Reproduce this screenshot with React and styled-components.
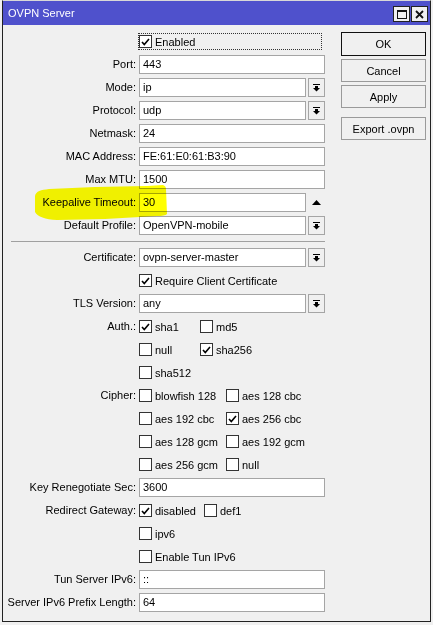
import * as React from "react"
import styled, { createGlobalStyle } from "styled-components"

const GlobalStyle = createGlobalStyle`
    html, body {
        margin: 0;
        padding: 0;
        background: #f0f0f0;
    }

    body {
        font-family: "Liberation Sans", Arial, sans-serif;
        font-size: 11px;
        color: #000;
    }
`

const Window = styled.div`
    width: 427px;
    margin-left: 2px;
    border: 1px solid #222;
    border-top-color: #d8d8d8;
    background: #f0f0f0;
`

const TitleBar = styled.div`
    height: 24px;
    background: #4f51cc;
    display: flex;
    align-items: center;
    justify-content: space-between;
    padding: 0 2px 0 5px;
`

const Title = styled.span`
    color: #fff;
    font-size: 11px;
`

const TitleButtons = styled.div`
    display: flex;
    gap: 1px;
    margin-top: 2px;
`

const TitleButton = styled.div`
    width: 15px;
    height: 14px;
    border: 1px solid #222;
    background: #f0f0f0;
    display: flex;
    align-items: center;
    justify-content: center;
`

const Body = styled.div`
    display: flex;
    gap: 16px;
    padding: 5px 4px 7px 0;
`

const Form = styled.div`
    position: relative;
    width: 322px;
    display: flex;
    flex-direction: column;
`

const Row = styled.div`
    display: grid;
    grid-template-columns: 133px 186px;
    column-gap: 3px;
    align-items: start;
    position: relative;
    z-index: 0;
`

const Label = styled.div`
    text-align: right;
    line-height: 23px;
    white-space: nowrap;
`

const Field = styled.div`
    display: flex;
    align-items: center;
    gap: 2px;
    min-height: 23px;
`

const TextBox = styled.div`
    flex: 1;
    height: 17px;
    line-height: 17px;
    padding: 0 3px;
    background: #fff;
    border: 1px solid #a5a5a5;
    white-space: nowrap;
    overflow: hidden;
`

const SideSlot = styled.div`
    width: 17px;
    height: 19px;
    box-sizing: border-box;
    display: flex;
    align-items: center;
    justify-content: center;
    border: 1px solid ${props => (props.$bare ? "transparent" : "#a5a5a5")};
`

const Options = styled.div`
    display: grid;
    grid-template-columns: ${props => props.$cols};
    grid-auto-rows: 23px;
    align-items: center;
`

const CheckLabel = styled.div`
    display: flex;
    align-items: center;
    gap: 3px;
    height: 15px;
    padding-right: 2px;
    border: 1px dotted ${props => (props.$focus ? "#333" : "transparent")};
    margin-left: -1px;
    ${props => props.$focus && "flex: 1; margin-right: 3px;"}
    white-space: nowrap;
`

const Box = styled.span`
    width: 13px;
    height: 13px;
    box-sizing: border-box;
    border: 1px solid #333;
    background: #fff;
    display: inline-flex;
    align-items: center;
    justify-content: center;
`

const Separator = styled.div`
    height: 9px;
    display: flex;
    align-items: center;
    padding-left: 8px;

    &:after {
        content: "";
        flex: 1;
        height: 1px;
        background: #a0a0a0;
    }
`

// marker stroke over the keepalive row
const Highlight = styled.svg`
    position: absolute;
    left: 32px;
    top: 155px;
    width: 132px;
    height: 35px;
    mix-blend-mode: multiply;
    pointer-events: none;
    z-index: 2;
`

const SideButtons = styled.div`
    display: flex;
    flex-direction: column;
    gap: 3px;
    margin-top: 2px;
`

const Button = styled.button`
    width: 85px;
    height: ${props => (props.$default ? "24px" : "23px")};
    margin-top: ${props => props.$gap || 0}px;
    font-family: "Liberation Sans", Arial, sans-serif;
    font-size: 11px;
    color: #000;
    background: #f0f0f0;
    border: 1px solid ${props => (props.$default ? "#111" : "#9a9a9a")};
    padding: 0;
`

const CheckMark = () => (
    <svg width="9" height="8" viewBox="0 0 9 8">
        <path d="M1 4 L3.3 6.6 L8 1" fill="none" stroke="#000" strokeWidth="1.6" />
    </svg>
)

const DropIcon = () => (
    <svg width="7" height="8" viewBox="0 0 7 8">
        <rect x="0" y="0" width="7" height="1" fill="#000" />
        <rect x="2" y="2" width="3" height="2" fill="#000" />
        <polygon points="0,4 7,4 3.5,7.5" fill="#000" />
    </svg>
)

const UpIcon = () => (
    <svg width="9" height="5" viewBox="0 0 9 5">
        <polygon points="0,5 9,5 4.5,0" fill="#000" />
    </svg>
)

const Check = ({ checked, label, focus }) => (
    <CheckLabel $focus={focus}>
        <Box>{checked && <CheckMark />}</Box>
        {label}
    </CheckLabel>
)

const TextRow = ({ label, value, side }) => (
    <Row>
        <Label>{label}</Label>
        <Field>
            <TextBox>{value}</TextBox>
            {side === "drop" && (
                <SideSlot>
                    <DropIcon />
                </SideSlot>
            )}
            {side === "up" && (
                <SideSlot $bare>
                    <UpIcon />
                </SideSlot>
            )}
        </Field>
    </Row>
)

const OptionRow = ({ label, cols, items }) => (
    <Row>
        <Label>{label}</Label>
        <Options $cols={cols}>
            {items.map(([text, on]) => (
                <Check key={text} label={text} checked={on} />
            ))}
        </Options>
    </Row>
)

const App = () => (
    <>
        <GlobalStyle />
        <Window>
            <TitleBar>
                <Title>OVPN Server</Title>
                <TitleButtons>
                    <TitleButton>
                        <svg width="10" height="9" viewBox="0 0 10 9">
                            <rect x="0.5" y="0.5" width="9" height="8" fill="none" stroke="#111" />
                            <rect x="0" y="0" width="10" height="2" fill="#111" />
                        </svg>
                    </TitleButton>
                    <TitleButton>
                        <svg width="9" height="9" viewBox="0 0 9 9">
                            <path d="M1 1 L8 8 M8 1 L1 8" stroke="#111" strokeWidth="1.8" />
                        </svg>
                    </TitleButton>
                </TitleButtons>
            </TitleBar>

            <Body>
                <Form>
                    <Row>
                        <Label />
                        <Field>
                            <Check checked label="Enabled" focus />
                        </Field>
                    </Row>
                    <TextRow label="Port:" value="443" />
                    <TextRow label="Mode:" value="ip" side="drop" />
                    <TextRow label="Protocol:" value="udp" side="drop" />
                    <TextRow label="Netmask:" value="24" />
                    <TextRow label="MAC Address:" value="FE:61:E0:61:B3:90" />
                    <TextRow label="Max MTU:" value="1500" />
                    <TextRow label="Keepalive Timeout:" value="30" side="up" />
                    <TextRow label="Default Profile:" value="OpenVPN-mobile" side="drop" />

                    <Separator />

                    <TextRow label="Certificate:" value="ovpn-server-master" side="drop" />
                    <Row>
                        <Label />
                        <Field>
                            <Check checked label="Require Client Certificate" />
                        </Field>
                    </Row>
                    <TextRow label="TLS Version:" value="any" side="drop" />
                    <OptionRow
                        label="Auth.:"
                        cols="61px auto"
                        items={[
                            ["sha1", true],
                            ["md5", false],
                            ["null", false],
                            ["sha256", true],
                            ["sha512", false],
                        ]}
                    />
                    <OptionRow
                        label="Cipher:"
                        cols="87px auto"
                        items={[
                            ["blowfish 128", false],
                            ["aes 128 cbc", false],
                            ["aes 192 cbc", false],
                            ["aes 256 cbc", true],
                            ["aes 128 gcm", false],
                            ["aes 192 gcm", false],
                            ["aes 256 gcm", false],
                            ["null", false],
                        ]}
                    />
                    <TextRow label="Key Renegotiate Sec:" value="3600" />
                    <OptionRow
                        label="Redirect Gateway:"
                        cols="65px auto"
                        items={[
                            ["disabled", true],
                            ["def1", false],
                            ["ipv6", false],
                        ]}
                    />
                    <Row>
                        <Label />
                        <Field>
                            <Check label="Enable Tun IPv6" />
                        </Field>
                    </Row>
                    <TextRow label="Tun Server IPv6:" value="::" />
                    <TextRow label="Server IPv6 Prefix Length:" value="64" />

                    <Highlight viewBox="0 0 132 35">
                        <path
                            d="M0 11 C1 6 6 5 14 4 L60 2 L112 1 L128 0 Q131 1 131 4 L132 29 Q130 31 122 31 L70 34 L22 35 Q4 34 0 27 Z"
                            fill="#ffff00"
                        />
                    </Highlight>
                </Form>

                <SideButtons>
                    <Button $default>OK</Button>
                    <Button>Cancel</Button>
                    <Button>Apply</Button>
                    <Button $gap={6}>Export .ovpn</Button>
                </SideButtons>
            </Body>
        </Window>
    </>
)

export default App
